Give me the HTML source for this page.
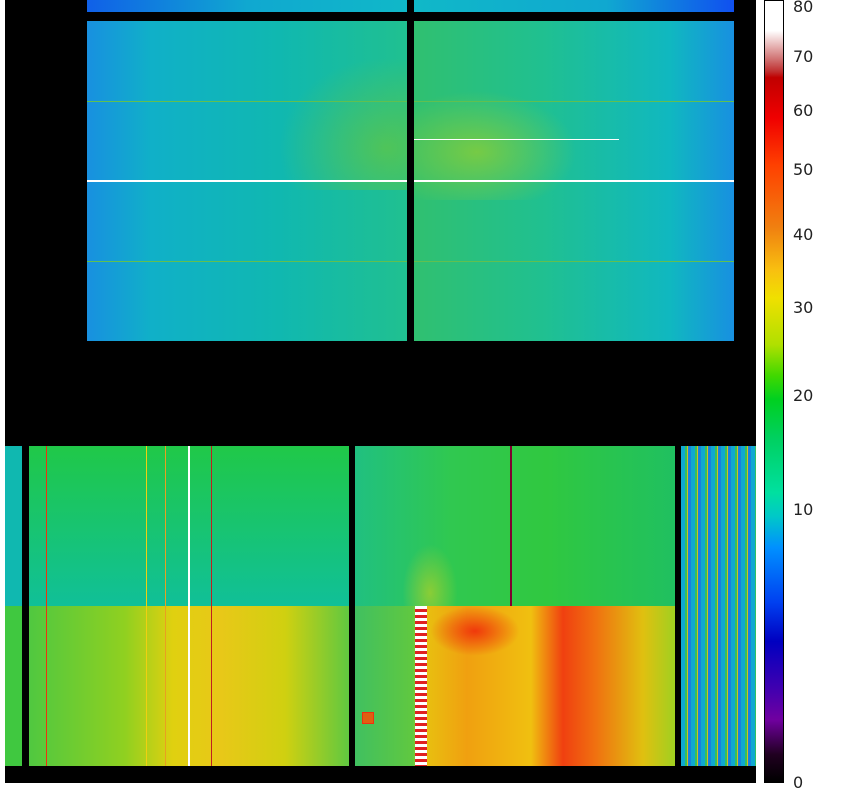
<!DOCTYPE html>
<html><head><style>
body{margin:0;width:868px;height:783px;background:#fff;position:relative;overflow:hidden;font-family:"DejaVu Sans","Liberation Sans",sans-serif}
div{position:absolute}
.l{font-size:16px;color:#222;left:793px;line-height:16px}
</style></head><body>
<div style="left:5px;top:0;width:751px;height:783px;background:#000"></div>
<div style="left:87px;top:0;width:320px;height:12px;background:linear-gradient(90deg,#1060e8,#10a8d0 50%,#10b8c8)"></div>
<div style="left:414px;top:0;width:320px;height:12px;background:linear-gradient(90deg,#10b8c8,#10a8d0 60%,#1050f0)"></div>
<div style="left:87px;top:21px;width:320px;height:320px;background:linear-gradient(90deg,#1890e0,#10b0c8 20%,#10b8b0 60%,#20c090)"></div>
<div style="left:270px;top:50px;width:137px;height:140px;background:radial-gradient(ellipse at 85% 70%,rgba(120,200,40,.55),rgba(60,200,60,0) 65%)"></div>
<div style="left:414px;top:21px;width:320px;height:320px;background:linear-gradient(90deg,#30c070,#20c090 40%,#10b8c0 80%,#1890e0)"></div>
<div style="left:414px;top:80px;width:180px;height:120px;background:radial-gradient(ellipse at 35% 60%,rgba(170,210,30,.6),rgba(60,200,60,0) 60%)"></div>
<div style="left:87px;top:180px;width:647px;height:2px;background:#fff"></div>
<div style="left:414px;top:139px;width:205px;height:1px;background:#fff"></div>
<div style="left:87px;top:101px;width:647px;height:1px;background:#60c050"></div>
<div style="left:87px;top:261px;width:647px;height:1px;background:#60c050"></div>
<div style="left:407px;top:0;width:7px;height:341px;background:#000"></div>
<div style="left:5px;top:446px;width:17px;height:160px;background:#10b8b0"></div>
<div style="left:5px;top:606px;width:17px;height:160px;background:#40c840"></div>
<div style="left:29px;top:446px;width:320px;height:160px;background:linear-gradient(180deg,#20c848,#10c098)"></div>
<div style="left:29px;top:606px;width:320px;height:160px;background:linear-gradient(90deg,#50c840,#90d020 30%,#e0d010 45%,#e8c818 60%,#d0d010 80%,#60c840)"></div>
<div style="left:46px;top:446px;width:1px;height:320px;background:#f03010"></div>
<div style="left:146px;top:446px;width:1px;height:320px;background:#f0d010"></div>
<div style="left:165px;top:446px;width:1px;height:320px;background:#e8a020"></div>
<div style="left:188px;top:446px;width:2px;height:320px;background:#fff"></div>
<div style="left:211px;top:446px;width:1px;height:320px;background:#c02020"></div>
<div style="left:355px;top:446px;width:320px;height:160px;background:linear-gradient(90deg,#20c080,#30c850 30%,#30c840 60%,#20c060)"></div>
<div style="left:400px;top:540px;width:60px;height:66px;background:radial-gradient(ellipse at 50% 80%,rgba(200,210,30,.6),rgba(60,200,60,0) 65%)"></div>
<div style="left:355px;top:606px;width:320px;height:160px;background:linear-gradient(90deg,#40c060,#60c840 18%,#e8c010 22%,#f0a010 35%,#f0c010 55%,#f04010 65%,#f07010 75%,#e0c010 90%,#a0d020)"></div>
<div style="left:430px;top:606px;width:90px;height:50px;background:radial-gradient(ellipse,rgba(240,30,10,.8),rgba(240,60,10,0) 70%)"></div>
<div style="left:415px;top:606px;width:12px;height:160px;background:repeating-linear-gradient(180deg,#fff 0 3px,#e02020 3px 6px)"></div>
<div style="left:510px;top:446px;width:2px;height:160px;background:#800030"></div>
<div style="left:362px;top:712px;width:10px;height:10px;background:#e06010;border:1px solid #f03010"></div>
<div style="left:681px;top:446px;width:75px;height:320px;background:repeating-linear-gradient(90deg,#10a8d0 0 4px,#30c060 4px 6px,#d0c020 6px 7px,#1880e0 7px 10px)"></div>
<div style="left:764px;top:0;width:18px;height:781px;border:1px solid #000;background:linear-gradient(180deg,#fff 0,#fff 3.8%,#f0d0d0 5%,#d07070 7.5%,#c03030 9%,#c00000 9.8%,#f00000 15%,#ff4000 21%,#f08010 29%,#f8c010 34.5%,#f0e000 38%,#b0e000 44%,#40d800 48%,#00d020 51%,#00d060 56%,#00e0a0 63%,#00c8c8 66%,#0090ff 70%,#0040f0 77%,#0000c0 82%,#4000b0 88%,#7000a0 92%,#200020 96.5%,#000 100%)"></div>
<div class="l" style="top:-1px">80</div>
<div class="l" style="top:49px">70</div>
<div class="l" style="top:103px">60</div>
<div class="l" style="top:162px">50</div>
<div class="l" style="top:227px">40</div>
<div class="l" style="top:300px">30</div>
<div class="l" style="top:388px">20</div>
<div class="l" style="top:502px">10</div>
<div class="l" style="top:775px">0</div>
</body></html>
